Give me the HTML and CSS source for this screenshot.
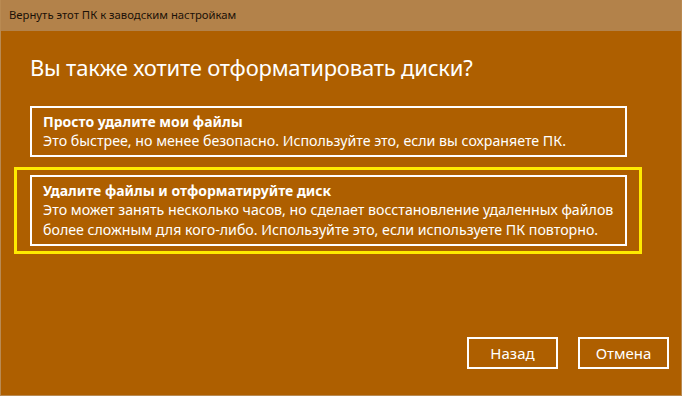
FILE: index.html
```html
<!DOCTYPE html>
<html lang="ru">
<head>
    <meta charset="UTF-8">
    <title>Вернуть этот ПК к заводским настройкам</title>
    <link rel="stylesheet" href="styles.css">
</head>
<body>
    <div class="window">
        <div class="titlebar">Вернуть этот ПК к заводским настройкам</div>

        <div class="content">
            <h1 class="heading">Вы также хотите отформатировать диски?</h1>

            <div class="options">
                <div class="option">
                    <div class="option-title">Просто удалите мои файлы</div>
                    <div class="option-text">Это быстрее, но менее безопасно. Используйте это, если вы сохраняете ПК.</div>
                </div>

                <!-- keyboard focus frame -->
                <div class="focus-ring">
                    <div class="option">
                        <div class="option-title">Удалите файлы и отформатируйте диск</div>
                        <div class="option-text">Это может занять несколько часов, но сделает восстановление удаленных файлов более сложным для кого-либо. Используйте это, если используете ПК повторно.</div>
                    </div>
                </div>
            </div>

            <div class="buttons">
                <button class="btn">Назад</button>
                <button class="btn">Отмена</button>
            </div>
        </div>
    </div>
</body>
</html>
```

FILE: styles.css
```css
* {
    margin: 0;
    padding: 0;
    box-sizing: border-box;
}

body {
    font-family: 'Noto Sans', 'Open Sans', sans-serif;
    background-color: #ae5f00;
    color: #fff;
}

.window {
    width: 682px;
    height: 396px;
    border: 1px solid #b98a52;
    border-top: none;
    background-color: #ae5f00;
    display: flex;
    flex-direction: column;
}

.titlebar {
    height: 31px;
    line-height: 30px;
    padding-left: 8px;
    background-color: #b3824a;
    color: #1b1108;
    font-size: 11.3px;
}

.content {
    flex: 1;
    display: flex;
    flex-direction: column;
}

.heading {
    font-weight: normal;
    font-size: 22px;
    line-height: 30px;
    margin: 21px 0 0 29px;
    letter-spacing: -0.2px;
}

.options {
    display: flex;
    flex-direction: column;
    margin-top: 24px;
}

.option {
    width: 597px;
    border: 2px solid #fff;
    padding: 4px 2px 4px 11px;
    font-size: 14.2px;
}

.options > .option {
    margin-left: 29px;
}

.option-title {
    font-weight: bold;
    font-size: 14px;
    line-height: 19px;
}

.option-text {
    line-height: 20px;
}

.focus-ring {
    width: 628px;
    margin: 10px 0 0 13px;
    border: 3px solid #ffea00;
    padding: 5px 12px 5px 13px;
}

.buttons {
    display: flex;
    justify-content: flex-end;
    gap: 20px;
    margin: auto 12px 26px 0;
}

.btn {
    width: 91px;
    height: 32px;
    border: 2px solid #fff;
    background: transparent;
    color: #fff;
    font-family: inherit;
    font-size: 15px;
}
```
